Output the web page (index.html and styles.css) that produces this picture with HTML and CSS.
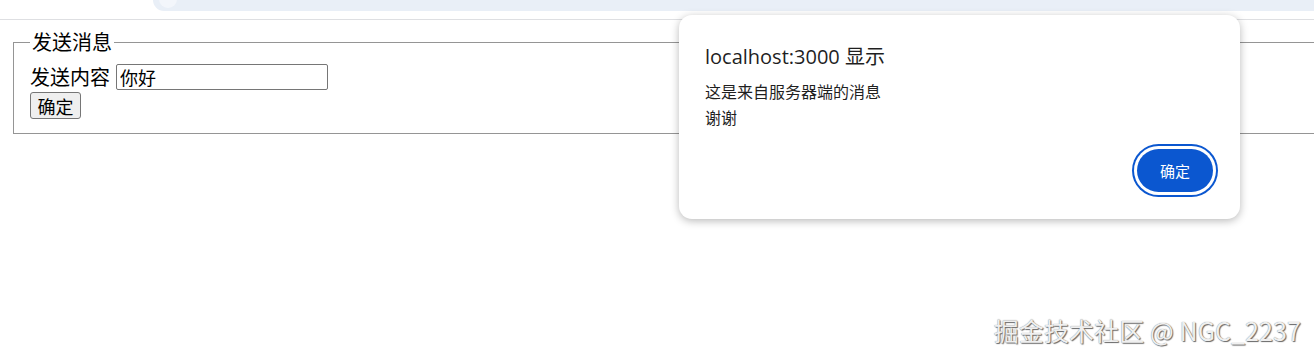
FILE: index.html
```
<!DOCTYPE html>
<html lang="zh-CN">
<head>
    <meta charset="UTF-8">
    <meta name="viewport" content="width=device-width, initial-scale=1.0">
    <title>发送消息</title>
    <link rel="stylesheet" href="styles.css">
</head>
<body>
    <div class="chrome">
        <div class="omnibox"><span class="omnibox-icon"></span></div>
    </div>

    <div class="page">
        <fieldset class="send-box">
            <legend>发送消息</legend>
            <div class="send-row">
                <label for="content">发送内容</label>
                <input type="text" id="content" value="你好">
            </div>
            <button class="send-btn">确定</button>
        </fieldset>
    </div>

    <!-- alert dialog -->
    <div class="dialog">
        <div class="dialog-title">localhost:3000 显示</div>
        <div class="dialog-msg">
            <div>这是来自服务器端的消息</div>
            <div>谢谢</div>
        </div>
        <div class="dialog-actions">
            <button class="dialog-ok">确定</button>
        </div>
    </div>

    <div class="watermark">掘金技术社区 @ NGC_2237</div>
</body>
</html>
```

FILE: styles.css
```
body {
    margin: 0;
    font-family: "Liberation Sans", "Noto Sans CJK SC", sans-serif;
    background-color: white;
    overflow: hidden;
    height: 359px;
}
.chrome {
    display: flex;
    height: 19px;
    padding-left: 153px;
    border-bottom: 1px solid #dedfe2;
    background-color: #fff;
}
.omnibox {
    flex: 1;
    height: 11px;
    background-color: #e9eff7;
    border-bottom-left-radius: 12px;
    position: relative;
}
.omnibox-icon {
    position: absolute;
    left: 6px;
    top: -10px;
    width: 18px;
    height: 18px;
    border-radius: 50%;
    background-color: #f3f6fb;
}
.page {
    padding: 10px 0 10px 10px;
    width: 1400px;
}
.send-box {
    margin: 0 3px;
    padding: 0 15px 14px 16px;
    border: 1px solid #959595;
    font-size: 20px;
}
.send-box legend {
    padding: 0 2px;
    font-size: 20px;
    line-height: 24px;
    font-family: "Noto Sans CJK SC", sans-serif;
}
.send-row {
    display: flex;
    align-items: center;
    gap: 6px;
    margin-top: 10px;
}
.send-row label {
    font-size: 20px;
    line-height: 26px;
    font-family: "Noto Sans CJK SC", sans-serif;
}
.send-row input {
    width: 204px;
    height: 24px;
    padding: 0 3px;
    border: 1px solid #767676;
    border-radius: 2px;
    font-size: 18px;
    font-family: "Noto Sans CJK SC", sans-serif;
}
.send-btn {
    display: block;
    margin-top: 2px;
    width: 51px;
    height: 27px;
    padding: 0;
    background-color: #efefef;
    border: 1px solid #767676;
    border-radius: 3px;
    font-size: 18px;
    font-family: "Noto Sans CJK SC", sans-serif;
}
.dialog {
    position: absolute;
    left: 679px;
    top: 15px;
    width: 561px;
    height: 204px;
    box-sizing: border-box;
    padding: 28px 27px 0 26px;
    background-color: white;
    border-radius: 13px;
    box-shadow: 0 2px 8px rgba(0,0,0,0.28);
}
.dialog-title {
    font-family: "Open Sans", "Noto Sans CJK SC", sans-serif;
    font-size: 20px;
    line-height: 28px;
    color: #1f1f1f;
}
.dialog-msg {
    margin-top: 7px;
    font-family: "Noto Sans CJK SC", sans-serif;
    font-size: 16px;
    line-height: 26px;
    color: #1f1f1f;
}
.dialog-actions {
    display: flex;
    justify-content: flex-end;
    margin-top: 19px;
}
.dialog-ok {
    width: 76px;
    height: 43px;
    background-color: #0b57d0;
    color: white;
    border: none;
    border-radius: 22px;
    box-shadow: 0 0 0 3px #fff, 0 0 0 5px #0b57d0;
    font-family: "Noto Sans CJK SC", sans-serif;
    font-size: 15px;
}
.watermark {
    position: absolute;
    right: 13px;
    bottom: 11px;
    font-family: "Noto Sans CJK SC", sans-serif;
    font-size: 25px;
    letter-spacing: 0.1px;
    color: #efefef;
    text-shadow: 1px 1px 1px #666, 0 0 1px #777;
}
```
